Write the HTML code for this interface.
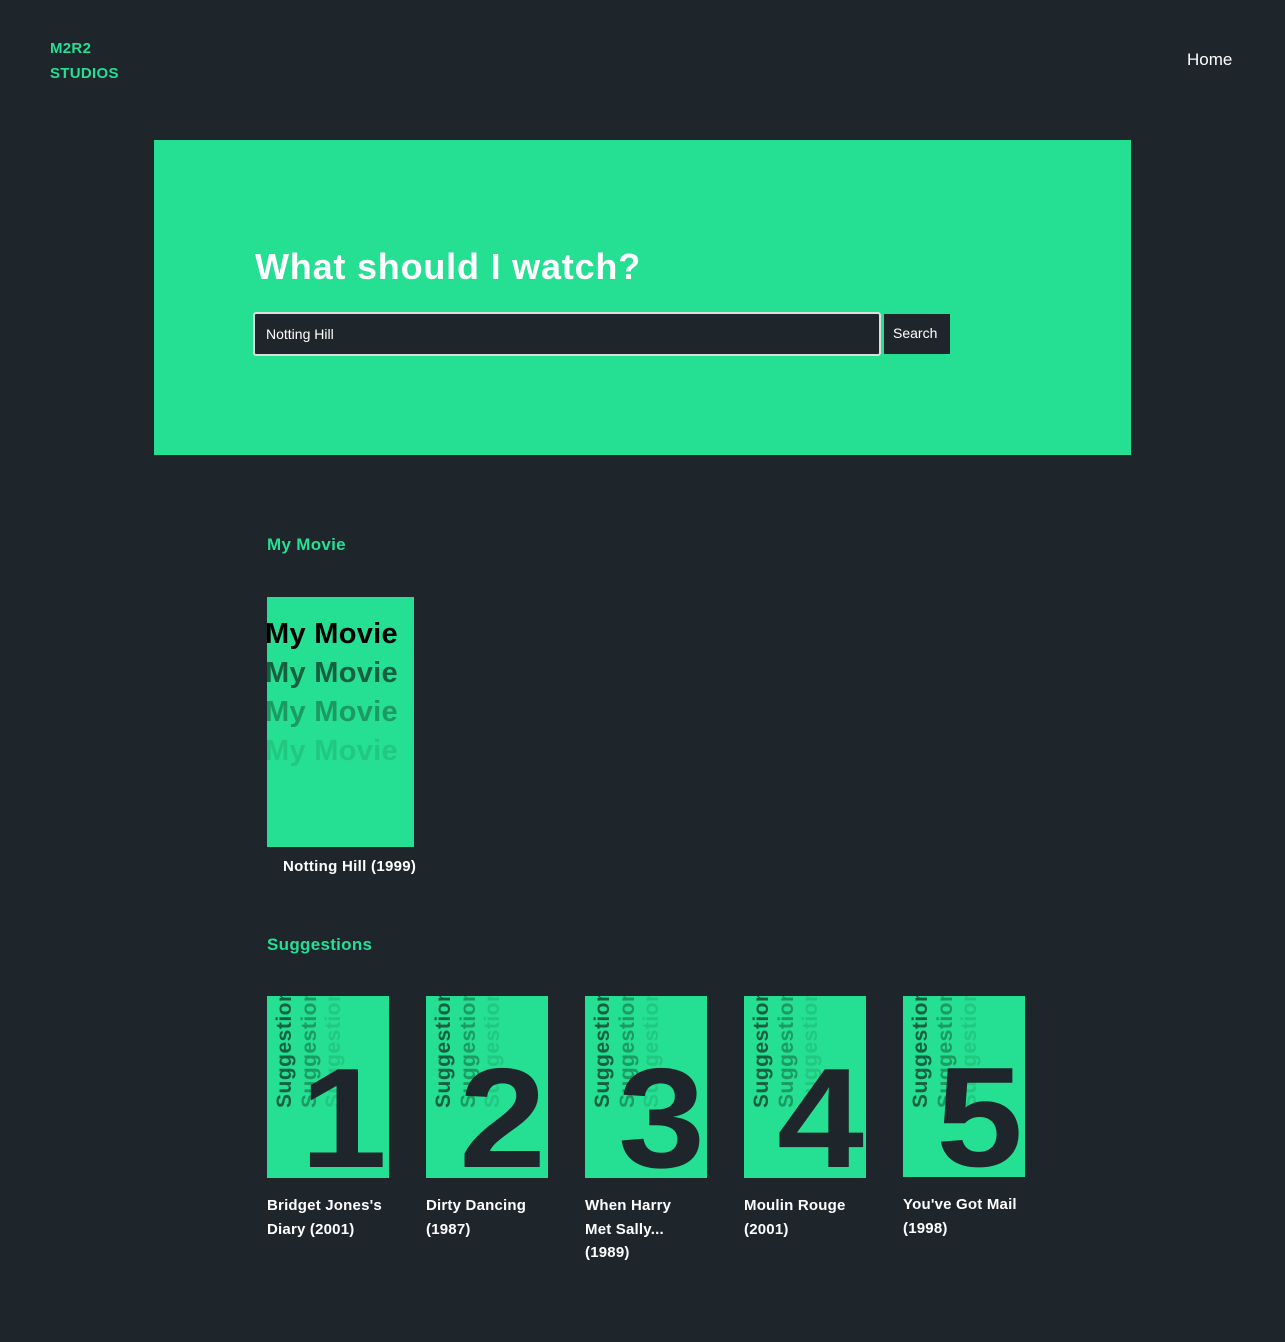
<!DOCTYPE html>
<html><head><meta charset="utf-8"><style>
*{margin:0;padding:0;box-sizing:border-box}
body{width:1285px;height:1342px;background:#1e252b;font-family:"Liberation Sans",sans-serif;position:relative;overflow:hidden;color:#fff}
.abs{position:absolute}
.g{color:#25df93;font-weight:bold}
.hero{left:154px;top:140px;width:977px;height:315px;background:#25df93}
.poster{position:absolute;top:996px;width:122px;height:182px;background:#25df93;overflow:hidden}
.vt{position:absolute;top:112px;font-size:21px;font-weight:bold;white-space:nowrap;transform:rotate(-90deg);transform-origin:0 0;letter-spacing:0.5px}
.num{position:absolute;right:2px;bottom:-12px;font-size:142px;font-weight:bold;color:#1e252b;line-height:1;transform:scaleX(1.1);transform-origin:right bottom}
.cap{position:absolute;top:1194px;width:130px;font-size:15px;font-weight:bold;line-height:23.5px;letter-spacing:0.2px}
.mm{position:absolute;left:-2px;font-size:29px;font-weight:bold;white-space:nowrap;letter-spacing:0.3px}
</style></head><body>
<div class="abs g" style="left:50px;top:36px;font-size:15px;line-height:25px;letter-spacing:0.3px">M2R2<br>STUDIOS</div>
<div class="abs" style="left:1187px;top:50px;font-size:17px">Home</div>
<div class="abs hero">
 <div class="abs" style="left:101px;top:106px;font-size:36px;font-weight:bold;letter-spacing:0.8px">What should I watch?</div>
 <div class="abs" style="left:99px;top:172px;width:628px;height:44px;background:#1e252b;border:2px solid #ddd;border-radius:3px;font-size:14px;padding:12px 11px">Notting Hill</div>
 <div class="abs" style="left:730px;top:174px;width:66px;height:40px;background:#1e252b;font-size:14px;padding:11px 9px">Search</div>
</div>
<div class="abs g" style="left:267px;top:535px;font-size:17px;letter-spacing:0.3px">My Movie</div>
<div class="abs" style="left:267px;top:597px;width:147px;height:250px;background:#25df93;overflow:hidden">
 <div class="mm" style="top:21px;color:#000">My Movie</div>
 <div class="mm" style="top:60px;color:#16603f">My Movie</div>
 <div class="mm" style="top:99px;color:#1c9a62">My Movie</div>
 <div class="mm" style="top:138px;color:#22c880">My Movie</div>
</div>
<div class="abs" style="left:283px;top:858px;font-size:15px;font-weight:bold;letter-spacing:0.3px">Notting Hill (1999)</div>
<div class="abs g" style="left:267px;top:935px;font-size:17px;letter-spacing:0.3px">Suggestions</div>

<div class="poster" style="left:267px"><div class="vt" style="left:6px;color:#16603f">Suggestion</div><div class="vt" style="left:31px;color:#1c9a62">Suggestion</div><div class="vt" style="left:55px;color:#22c880">Suggestion</div><div class="num">1</div></div>
<div class="poster" style="left:426px"><div class="vt" style="left:6px;color:#16603f">Suggestion</div><div class="vt" style="left:31px;color:#1c9a62">Suggestion</div><div class="vt" style="left:55px;color:#22c880">Suggestion</div><div class="num">2</div></div>
<div class="poster" style="left:585px"><div class="vt" style="left:6px;color:#16603f">Suggestion</div><div class="vt" style="left:31px;color:#1c9a62">Suggestion</div><div class="vt" style="left:55px;color:#22c880">Suggestion</div><div class="num">3</div></div>
<div class="poster" style="left:744px"><div class="vt" style="left:6px;color:#16603f">Suggestion</div><div class="vt" style="left:31px;color:#1c9a62">Suggestion</div><div class="vt" style="left:55px;color:#22c880">Suggestion</div><div class="num">4</div></div>
<div class="poster" style="left:903px;height:181px"><div class="vt" style="left:6px;color:#16603f">Suggestion</div><div class="vt" style="left:31px;color:#1c9a62">Suggestion</div><div class="vt" style="left:55px;color:#22c880">Suggestion</div><div class="num">5</div></div>

<div class="cap" style="left:267px">Bridget Jones's Diary (2001)</div>
<div class="cap" style="left:426px">Dirty Dancing (1987)</div>
<div class="cap" style="left:585px;width:110px">When Harry Met Sally... (1989)</div>
<div class="cap" style="left:744px">Moulin Rouge (2001)</div>
<div class="cap" style="left:903px;top:1193px">You've Got Mail (1998)</div>
</body></html>
